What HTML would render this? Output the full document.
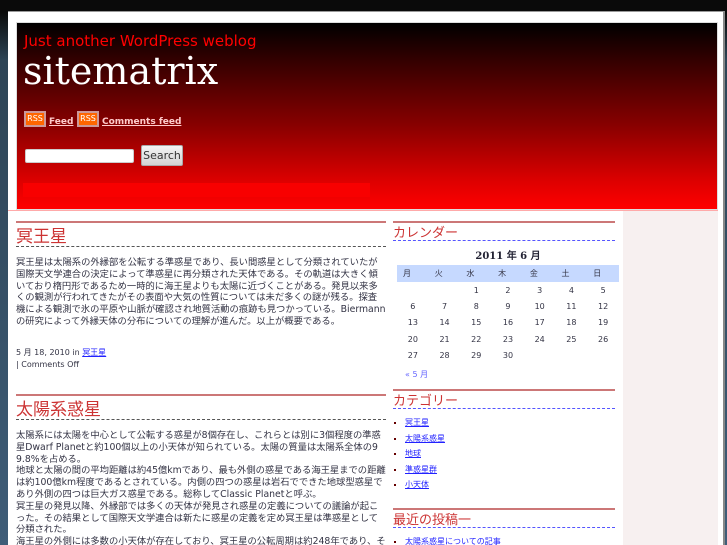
<!DOCTYPE html>
<html style="overflow:hidden;width:727px;height:545px"><head><meta charset="utf-8"><style>
*{margin:0;padding:0;box-sizing:border-box}
body{width:727px;height:545px;overflow:hidden;background:linear-gradient(#0a0a0a,#0a0a0a 12px,#2d4455 60px,#3f5d78 545px);font-family:"Liberation Sans","DejaVu Sans","Noto Sans CJK JP",sans-serif;position:relative}
#wrap{position:absolute;left:8px;top:11px;width:717px;height:534px;background:#fff;border-top:1px solid #999;border-right:2px solid #888}
#head{position:absolute;left:8px;top:11px;width:702px;height:188px;background:linear-gradient(#000,#300 20%,#800 55%,#d00 85%,#f00);border:1px solid #ddd}
#tag{position:absolute;left:7px;top:9px;color:#f00;font-family:"DejaVu Sans",sans-serif;font-size:15px}
#title{position:absolute;left:6px;top:26px;color:#fff;font-family:"DejaVu Serif",serif;font-size:38px}
.rss{position:absolute;top:88px;font-family:"DejaVu Sans",sans-serif;font-size:9px;font-weight:bold;color:#fcc;text-decoration:underline}
.rss i{display:inline-block;width:22px;height:16px;background:#f60;border:2px solid #c99;color:#fff;font-style:normal;font-size:8px;font-weight:normal;text-align:center;line-height:12px;vertical-align:bottom;margin-right:3px}
#srch{position:absolute;left:8px;top:126px;width:109px;height:14px;background:#fff;border:1px solid #ccc;border-radius:2px}
#btn{position:absolute;left:124px;top:122px;width:42px;height:21px;background:linear-gradient(#f4f4f4,#d4d4d4);border:1px solid #aaa;border-radius:2px;font-family:"DejaVu Sans",sans-serif;font-size:11px;color:#333;text-align:center;line-height:19px}
#bar{position:absolute;left:6px;top:160px;width:347px;height:14px;background:#f80000}
#side2{position:absolute;left:623px;top:211px;width:95px;height:334px;background:#f7f0f0}
#pinkline{position:absolute;left:8px;top:210px;width:710px;height:1px;background:#faa}
.main{position:absolute;left:16px;width:370px;color:#334;font-size:9.3px;line-height:11.8px;font-family:"DejaVu Sans","Noto Sans CJK JP",sans-serif;overflow:hidden}
h2{border-top:2px solid #c77;border-bottom:1px dashed #555;color:#c33;font-weight:normal;font-size:17px;line-height:22px;padding-top:1px;font-family:"Noto Sans CJK JP",sans-serif}
.main p{margin-top:10px;word-break:break-all}
.meta{position:absolute;left:16px;top:347px;font-size:8px;line-height:12px;color:#334;font-family:"DejaVu Sans","Noto Sans CJK JP",sans-serif}
.side{position:absolute;left:393px;width:222px;font-size:8px;color:#334;font-family:"DejaVu Sans","Noto Sans CJK JP",sans-serif}
.side h3{border-top:2px solid #c77;border-bottom:1px dashed #55f;color:#c33;font-weight:normal;font-size:13px;line-height:17px;font-family:"Noto Sans CJK JP",sans-serif}
table{border-collapse:collapse;margin-left:4px;width:222px}
caption{font-family:"DejaVu Serif",serif;font-weight:bold;font-size:10px;padding:6px 0 3px;color:#223}
th{background:#c6d9ff;font-weight:normal;height:17px;text-align:left;padding-left:6px}
td{text-align:center;height:16.3px}
ul{list-style:square;margin:6px 0 0 12px;color:#600}
li{line-height:15.5px}
a{color:#22f}
</style></head><body>
<div id="wrap"></div>
<div style="position:absolute;left:8px;top:11px">
<div id="head">
<div id="tag">Just another WordPress weblog</div>
<div id="title">sitematrix</div>
<span class="rss" style="left:7px"><i>RSS</i>Feed</span>
<span class="rss" style="left:60px"><i>RSS</i>Comments feed</span>
<div id="srch"></div><div id="btn">Search</div>
<div id="bar"></div>
</div></div>
<div id="pinkline"></div>
<div id="side2"></div>
<div class="main" style="top:221px;height:120px">
<h2>冥王星</h2>
<p>冥王星は太陽系の外縁部を公転する準惑星であり、長い間惑星として分類されていたが国際天文学連合の決定によって準惑星に再分類された天体である。その軌道は大きく傾いており楕円形であるため一時的に海王星よりも太陽に近づくことがある。発見以来多くの観測が行われてきたがその表面や大気の性質については未だ多くの謎が残る。探査機による観測で氷の平原や山脈が確認され地質活動の痕跡も見つかっている。Biermann の研究によって外縁天体の分布についての理解が進んだ。以上が概要である。</p>
</div>
<div class="meta">5 月 18, 2010 in <a href="#">冥王星</a><br>| Comments Off</div>
<div class="main" style="top:394px;height:151px">
<h2>太陽系惑星</h2>
<p>太陽系には太陽を中心として公転する惑星が8個存在し、これらとは別に3個程度の準惑星Dwarf Planetと約100個以上の小天体が知られている。太陽の質量は太陽系全体の99.8%を占める。<br>地球と太陽の間の平均距離は約45億kmであり、最も外側の惑星である海王星までの距離は約100億km程度であるとされている。内側の四つの惑星は岩石でできた地球型惑星であり外側の四つは巨大ガス惑星である。総称してClassic Planetと呼ぶ。<br>冥王星の発見以降、外縁部では多くの天体が発見され惑星の定義についての議論が起こった。その結果として国際天文学連合は新たに惑星の定義を定め冥王星は準惑星として分類された。<br>海王星の外側には多数の小天体が存在しており、冥王星の公転周期は約248年であり、その軌道は海王星と交差する。約20年間は海王星より内側にあり1979年から1999年までがその期間であった。</p>
</div>
<div class="side" style="top:221px">
<h3>カレンダー</h3>
<table><caption>2011 年 6 月</caption>
<tr><th>月</th><th>火</th><th>水</th><th>木</th><th>金</th><th>土</th><th>日</th></tr>
<tr><td></td><td></td><td>1</td><td>2</td><td>3</td><td>4</td><td>5</td></tr>
<tr><td>6</td><td>7</td><td>8</td><td>9</td><td>10</td><td>11</td><td>12</td></tr>
<tr><td>13</td><td>14</td><td>15</td><td>16</td><td>17</td><td>18</td><td>19</td></tr>
<tr><td>20</td><td>21</td><td>22</td><td>23</td><td>24</td><td>25</td><td>26</td></tr>
<tr><td>27</td><td>28</td><td>29</td><td>30</td><td></td><td></td><td></td></tr>
</table>
<div style="margin:6px 0 0 12px;color:#66f">« 5 月</div>
</div>
<div class="side" style="top:389px">
<h3>カテゴリー</h3>
<ul><li><a href="#">冥王星</a></li><li><a href="#">太陽系惑星</a></li><li><a href="#">地球</a></li><li><a href="#">準惑星群</a></li><li><a href="#">小天体</a></li></ul>
</div>
<div class="side" style="top:508px;height:37px;overflow:hidden">
<h3>最近の投稿一</h3>
<ul><li><a href="#">太陽系惑星についての記事</a></li></ul>
</div>
</body></html>
